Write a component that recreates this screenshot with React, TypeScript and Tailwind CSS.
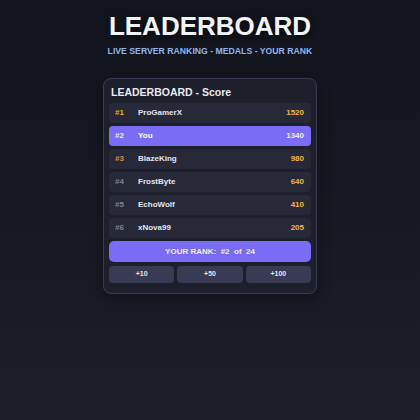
import React from 'react';

const players = [
  { rank: 1, name: 'ProGamerX', score: 1520 },
  { rank: 2, name: 'You', score: 1340, me: true },
  { rank: 3, name: 'BlazeKing', score: 980 },
  { rank: 4, name: 'FrostByte', score: 640 },
  { rank: 5, name: 'EchoWolf', score: 410 },
  { rank: 6, name: 'xNova99', score: 205 },
];

function rankColor(rank: number, me?: boolean) {
  if (me) return 'text-[#e8e6ff]';
  if (rank === 1) return 'text-[#e0b030]';
  if (rank === 2) return 'text-[#c0c4d0]';
  if (rank === 3) return 'text-[#d98a48]';
  return 'text-[#7d8296]';
}

export default function App() {
  return (
    <main
      className="min-h-[420px] w-full bg-gradient-to-b from-[#11141c] to-[#1c1e28] flex flex-col items-center pt-[11px] text-white"
      style={{ fontFamily: '"Liberation Sans", Arial, sans-serif' }}
    >
      <h1 className="text-[26px] leading-[30px] font-bold text-[#f3f4f8] [text-shadow:0_2px_6px_rgba(0,0,0,0.6)]">
        LEADERBOARD
      </h1>
      <p className="mt-[4px] text-[8.7px] leading-[12px] font-bold text-[#8fb6ee]">
        LIVE SERVER RANKING - MEDALS - YOUR RANK
      </p>

      <div className="mt-[21px] w-[214px] rounded-[8px] border border-[#3a3a52] bg-[#1d1f2b] px-[5px] pt-[6px] pb-[10px] shadow-[0_4px_14px_rgba(0,0,0,0.35)]">
        <h2 className="pl-[2px] text-[10.5px] leading-[14px] font-bold text-[#e8e9f0]">
          LEADERBOARD - Score
        </h2>
        <div className="mt-[4px] flex flex-col gap-[3px]">
          {players.map((p) => (
            <div
              key={p.rank}
              className={`h-[20px] rounded-[4px] flex items-center pl-[6px] pr-[7px] text-[8px] font-bold ${
                p.me ? 'bg-[#7b6cf6]' : 'bg-[#272938]'
              }`}
            >
              <span className={`w-[23px] ${rankColor(p.rank, p.me)}`}>#{p.rank}</span>
              <span className={`flex-1 ${p.me ? 'text-white' : 'text-[#e4e5ec]'}`}>{p.name}</span>
              <span className={p.me ? 'text-[#f1efff]' : 'text-[#f4b93a]'}>{p.score}</span>
            </div>
          ))}
        </div>
        <div className="mt-[3px] h-[21px] rounded-[5px] bg-[#7b6cf6] flex items-center justify-center text-[8px] font-bold text-[#f1efff] whitespace-pre">
          {'YOUR RANK:  #2  of  24'}
        </div>
        <div className="mt-[4px] grid grid-cols-3 gap-[3px]">
          {['+10', '+50', '+100'].map((b) => (
            <button
              key={b}
              className="h-[17px] rounded-[4px] bg-[#393b54] text-[7px] font-bold text-[#e4e5ec]"
            >
              {b}
            </button>
          ))}
        </div>
      </div>
    </main>
  );
}
